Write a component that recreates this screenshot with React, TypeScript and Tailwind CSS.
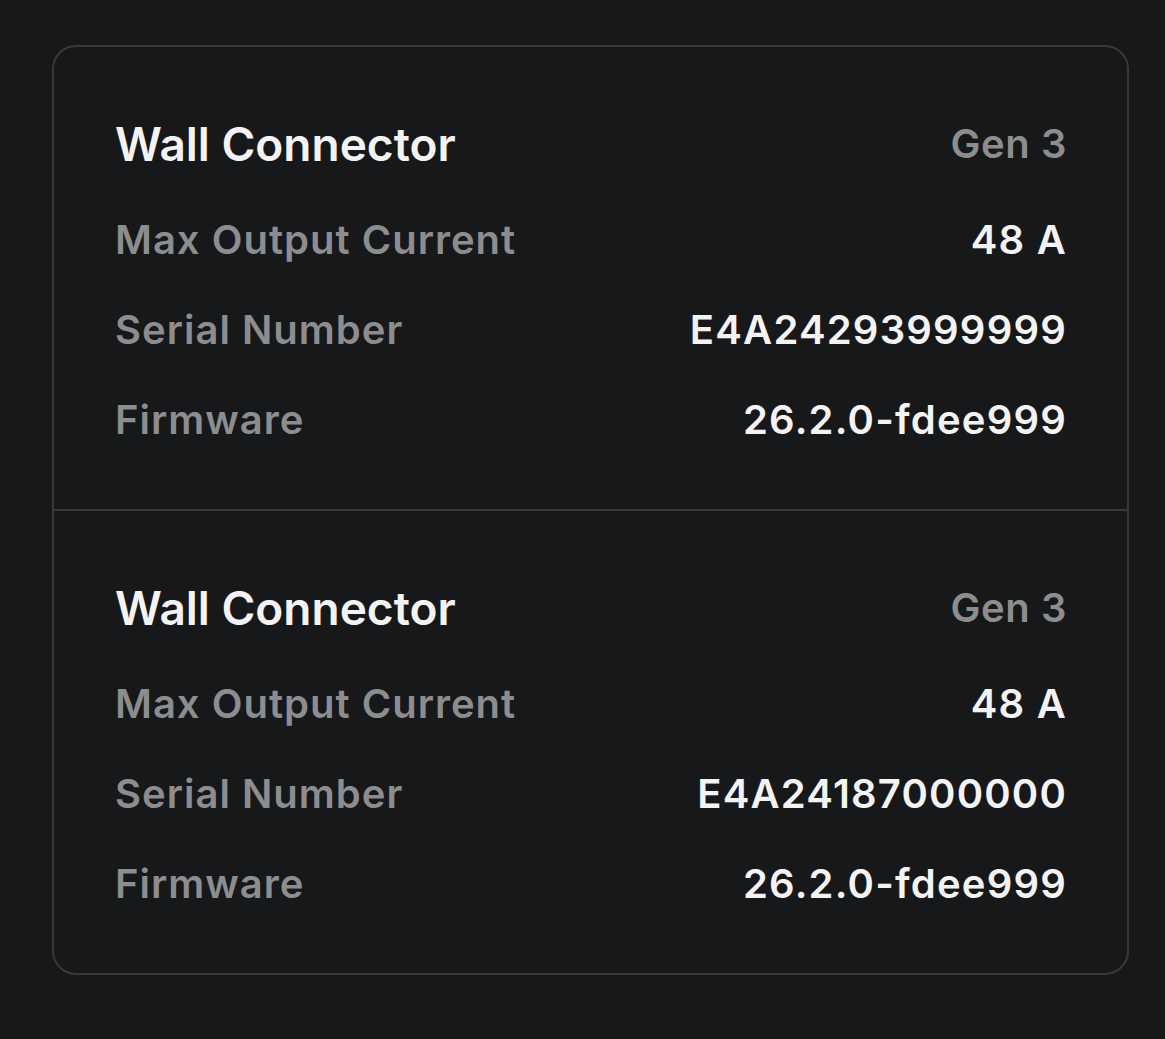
import React from 'react';

type Row = { label: string; value: string };

const units: { model: string; rows: Row[] }[] = [
  {
    model: 'Gen 3',
    rows: [
      { label: 'Max Output Current', value: '48 A' },
      { label: 'Serial Number', value: 'E4A24293999999' },
      { label: 'Firmware', value: '26.2.0-fdee999' },
    ],
  },
  {
    model: 'Gen 3',
    rows: [
      { label: 'Max Output Current', value: '48 A' },
      { label: 'Serial Number', value: 'E4A24187000000' },
      { label: 'Firmware', value: '26.2.0-fdee999' },
    ],
  },
];

const UnitSection = ({ model, rows }: { model: string; rows: Row[] }) => (
  <div className="h-[462px] pl-[61px] pr-[60px] pt-[69px]">
    <div className="flex items-center justify-between">
      <span className="text-[46px] leading-[56px] font-semibold text-[#f3f3f4]">Wall Connector</span>
      <span className="text-[40px] leading-[56px] font-semibold tracking-[0.015em] text-[#8c8d8f]">{model}</span>
    </div>
    <div className="mt-[44px] flex flex-col gap-[42px]">
      {rows.map((r) => (
        <div key={r.label} className="flex items-baseline justify-between text-[40px] leading-[48px] font-semibold">
          <span className="tracking-[0.025em] text-[#8c8d8f]">{r.label}</span>
          <span className="tracking-[0.03em] text-[#f3f3f4]">{r.value}</span>
        </div>
      ))}
    </div>
  </div>
);

export default function App() {
  return (
    <div className="min-h-[1039px] w-full bg-[#17181a] pt-[45px] pl-[52px] pr-[36px]" style={{ fontFamily: 'Inter, "Noto Sans", sans-serif' }}>
      <div className="w-[1077px] rounded-[24px] border-2 border-[#38393b] overflow-hidden">
        <UnitSection model={units[0].model} rows={units[0].rows} />
        <div className="h-[2px] bg-[#38393b]" />
        <UnitSection model={units[1].model} rows={units[1].rows} />
      </div>
    </div>
  );
}
